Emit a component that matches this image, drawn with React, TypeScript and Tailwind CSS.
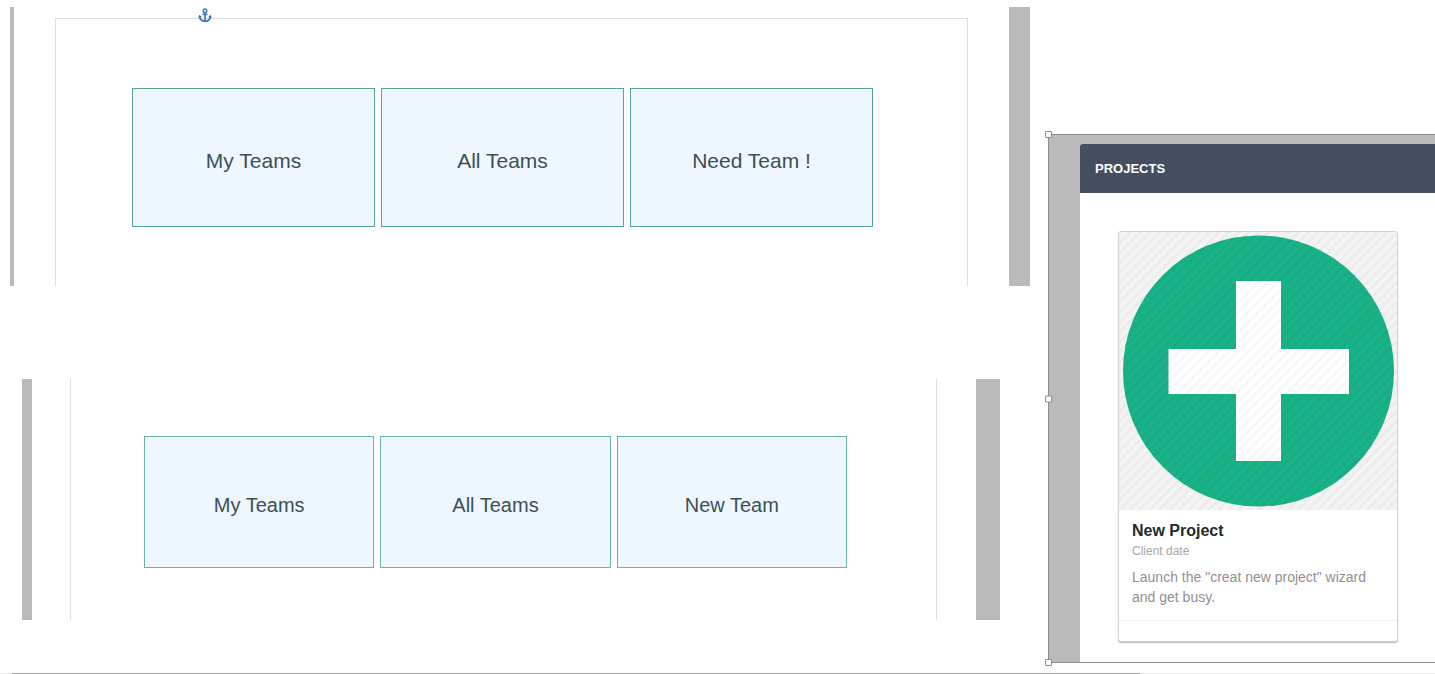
import React from "react";

type TeamBoardProps = {
  label: string;
  tiles: string[];
  className: string;
  leftBar: string;
  rightBar: string;
  frame: string;
  tile: string;
  children?: React.ReactNode;
};

function TeamBoard({ label, tiles, className, leftBar, rightBar, frame, tile, children }: TeamBoardProps) {
  return (
    <section aria-label={label} className={`flex ${className}`}>
      <div className={`shrink-0 bg-[#bababa] ${leftBar}`} />
      <div className={`relative grid flex-1 grid-cols-3 gap-1.5 border-[#dedede] ${frame}`}>
        {children}
        {tiles.map((name) => (
          <button
            key={name}
            type="button"
            className={`border bg-[#eef7fe] text-center leading-7 text-[#3b5055] ${tile}`}
          >
            {name}
          </button>
        ))}
      </div>
      <div className={`shrink-0 bg-[#bababa] ${rightBar}`} />
    </section>
  );
}

function AnchorIcon() {
  return (
    <svg
      aria-hidden="true"
      viewBox="0 0 14 15"
      className="absolute -top-[11px] left-[142px] h-[15px] w-3.5"
      fill="none"
      stroke="#4a78b0"
    >
      <circle cx="7" cy="2.8" r="1.8" strokeWidth="1.5" />
      <path d="M7 4.600V13M4.500 6.300h5" strokeWidth="1.7" />
      <path d="M1.600 8.400C2 11.400 4 13.200 7 13.300C10 13.200 12 11.400 12.400 8.400" strokeWidth="1.9" />
      <path d="M.2 9.700L1.300 6.700L3.900 9ZM13.800 9.700L12.700 6.700L10.100 9Z" fill="#4a78b0" stroke="none" />
    </svg>
  );
}

function PlusArtwork() {
  return (
    <svg aria-hidden="true" viewBox="0 0 278 278" className="block w-full">
      <defs>
        <pattern id="stripes" width="7" height="7" patternUnits="userSpaceOnUse" patternTransform="rotate(45)">
          <rect width="2" height="7" fill="#000000" fillOpacity="0.035" />
        </pattern>
      </defs>
      <rect width="278" height="278" fill="#f3f3f3" />
      <circle cx="139.500" cy="139" r="135.500" fill="#19b187" />
      <path d="M117 49h45v68h68v45h-68v67h-45v-67H49.500v-45H117z" fill="#ffffff" />
      <rect width="278" height="278" fill="url(#stripes)" />
    </svg>
  );
}

function Handle({ className }: { className: string }) {
  return <span className={`absolute size-[7px] rounded-[1px] border border-[#8a8a8a] bg-white ${className}`} />;
}

function ProjectsPanel() {
  return (
    <section className="relative mt-[134px] w-[387px] shrink-0 border-y border-l border-[#8c8c8c] bg-[#bababa] pt-[9px] pl-[31px]">
      <Handle className="-top-1 -left-1" />
      <Handle className="top-1/2 -left-1 -translate-y-1/2" />
      <Handle className="-bottom-1 -left-1" />
      <h2 className="rounded-tl-[3px] bg-[#434e61] px-[15px] pt-[15px] pb-3.5 text-[13px] leading-5 font-bold text-white">
        PROJECTS
      </h2>
      <div className="bg-white pt-[38px] pr-[37px] pb-5 pl-[38px]">
        <article className="overflow-hidden rounded-[3px] border border-[#d2d2d2] bg-white shadow-[0_1px_1px_#b8b8b8]">
          <PlusArtwork />
          <div className="px-[13px] pt-[11px] pb-[13px]">
            <h3 className="text-base leading-5 font-bold text-[#252a2a]">New Project</h3>
            <p className="text-xs leading-5 text-[#aaa5a5]">Client date</p>
            <p className="mt-1.5 text-sm leading-5 text-[#938f8f]">
              Launch the "creat new project" wizard and get busy.
            </p>
          </div>
          <div className="h-[21px] border-t border-[#f1f1f1]" />
        </article>
      </div>
    </section>
  );
}

export default function App() {
  return (
    <main className="bg-white font-['Liberation_Sans',Arial,sans-serif]">
      <div className="flex items-start">
        <div className="min-w-0 flex-1">
          <TeamBoard
            label="Team overview"
            tiles={["My Teams", "All Teams", "Need Team !"]}
            className="mt-[7px] mr-[18px] ml-2.5"
            leftBar="w-1"
            rightBar="w-[21px]"
            frame="mx-[41px] mt-[11px] border-x border-t pt-[69px] pr-[94px] pb-[59px] pl-[76px]"
            tile="border-[#58a3a0] pt-[58px] pb-[51px] text-[21px]"
          >
            <AnchorIcon />
          </TeamBoard>
          <TeamBoard
            label="Team management"
            tiles={["My Teams", "All Teams", "New Team"]}
            className="mt-[93px] mr-12 ml-[22px]"
            leftBar="w-2.5"
            rightBar="w-6"
            frame="mr-[39px] ml-[38px] border-x pt-[57px] pr-[89px] pb-[52px] pl-[73px]"
            tile="border-[#68b5a6] pt-[54px] pb-12 text-xl"
          />
        </div>
        <ProjectsPanel />
      </div>
      <div className="mt-2.5 flex h-px bg-[#e6e6e6] pr-[295px] pl-3">
        <div className="flex-1 bg-[#a2a2a2]" />
      </div>
    </main>
  );
}
